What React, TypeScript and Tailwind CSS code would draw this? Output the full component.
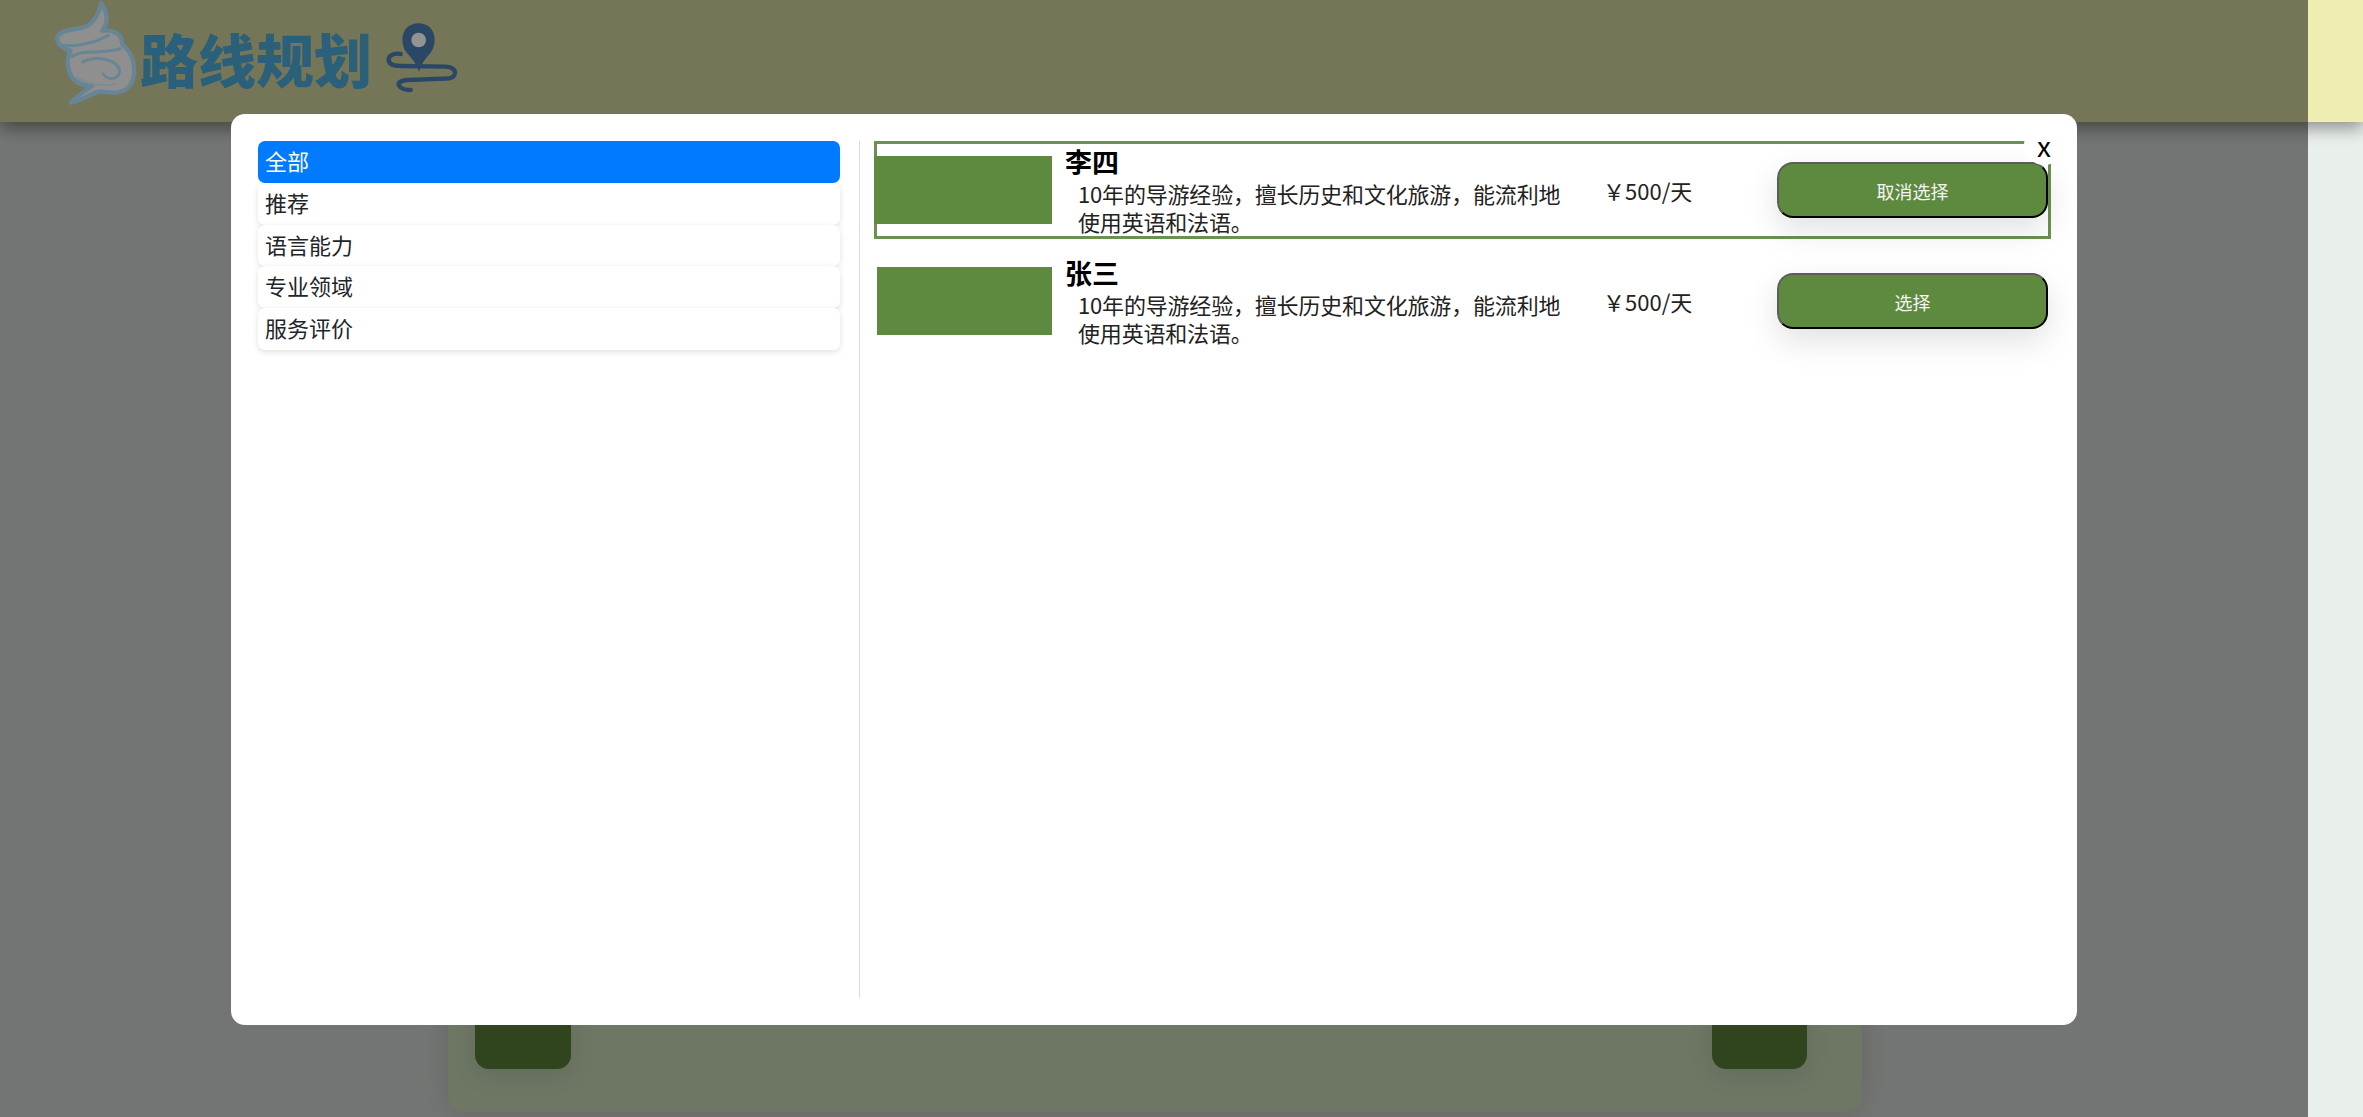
import React from "react";

const font = { fontFamily: '"Noto Sans CJK SC", "Noto Sans", sans-serif' };

function SwirlLogo() {
  return (
    <svg width="100" height="110" viewBox="0 0 300 330" fill="none" strokeLinecap="round" strokeLinejoin="round" className="shrink-0">
      <path
        d="M183 8 C205 40 205 72 186 92 C222 88 248 102 246 132 C282 160 292 215 274 250 C256 285 215 280 180 274 C150 282 118 304 92 308 C110 290 130 274 156 258 C126 258 102 246 90 222 C78 192 82 170 92 152 C66 146 48 128 52 110 C58 92 96 88 125 84 C160 76 176 44 183 8 Z"
        fill="#8f8f90"
        stroke="#678595"
        strokeWidth="13"
      />
      <path d="M68 136 C110 142 165 128 205 106" stroke="#678595" strokeWidth="9" />
      <path d="M96 170 C125 145 190 165 240 146" stroke="#678595" strokeWidth="9" />
      <path d="M128 186 C160 168 225 172 238 208 C244 236 206 246 190 222" stroke="#678595" strokeWidth="9" />
      <path d="M110 232 C140 250 185 262 226 252" stroke="#7d8c92" strokeWidth="6" />
    </svg>
  );
}

function PinIcon() {
  return (
    <svg width="100" height="90" viewBox="0 0 300 270" fill="none" className="shrink-0 mt-[10px]">
      <path d="M92 132 C70 128 55 138 56 150 C57 165 75 168 92 168 L225 170 C248 171 256 180 255 190 C253 202 240 206 225 206 L110 210 C90 212 82 220 88 228 C94 238 110 240 122 240" stroke="#2a4866" strokeWidth="13" strokeLinecap="round" />
      <path d="M147 186 C140 160 125 145 110 128 C88 100 92 40 146 40 C198 40 204 100 182 128 C168 145 153 160 147 186 Z" fill="#2a4866" />
      <circle cx="146" cy="90" r="22" fill="#939393" />
    </svg>
  );
}

const filters = ["全部", "推荐", "语言能力", "专业领域", "服务评价"];

function GuideCard({ name, selected }: { name: string; selected: boolean }) {
  return (
    <div className={`flex items-center h-[98px] border-[3px] ${selected ? "border-[#6b9150]" : "border-transparent"}`}>
      <div className={`h-[68px] shrink-0 bg-[#5e8a3f] ${selected ? "w-[178px] -ml-[3px]" : "w-[175px]"}`} />
      <div className="self-start pt-[3px] ml-[13px] w-[511px] shrink-0 text-black">
        <div className="text-[27px] leading-[30px] font-bold">{name}</div>
        <div className="ml-[13px] mt-[2px] w-[490px] text-[22px] leading-[28.4px] tracking-[-0.18px] text-[#222]">
          10年的导游经验，擅长历史和文化旅游，能流利地使用英语和法语。
        </div>
      </div>
      <div className="ml-[27px] w-[174px] shrink-0 text-[22px] leading-[29px] text-[#222]">￥500/天</div>
      <button className="w-[271px] h-[56px] shrink-0 pt-[2px] rounded-[16px] border-2 border-solid border-t-[#5c5c5c] border-l-[#5c5c5c] border-r-black border-b-black bg-[#5e8a3f] text-[18px] text-[#f4f4f4] shadow-[0_12px_32px_rgba(0,0,0,0.12)]">
        {selected ? "取消选择" : "选择"}
      </button>
    </div>
  );
}

export default function App() {
  return (
    <div className="relative w-full h-[1117px] overflow-hidden bg-[#e9efea]" style={font}>
      <header className="relative flex items-start h-[122px] pl-[40px] bg-[#eeeeb3] shadow-[0_6px_16px_rgba(0,0,0,0.4)]">
        <div className="relative z-20 flex items-start">
          <SwirlLogo />
          <div className="mt-[27px] text-[58px] leading-[62px] font-black text-[#2a6079] whitespace-nowrap">路线规划</div>
          <div className="ml-[-2px]">
            <PinIcon />
          </div>
        </div>
      </header>

      <main className="flex justify-center w-[2310px] pt-[100px]">
        <section className="flex items-end justify-between w-[1414px] h-[890px] pl-[27px] pr-[55px] pb-[43px] rounded-[16px] bg-[#e0f2cc] shadow-[0_0_30px_rgba(0,0,0,0.12)]">
          <button className="w-[96px] h-[60px] rounded-[14px] bg-[#628c3e] shadow-[0_6px_24px_rgba(0,0,0,0.1)]" />
          <button className="w-[95px] h-[60px] rounded-[14px] bg-[#628c3e] shadow-[0_6px_24px_rgba(0,0,0,0.1)]" />
        </section>
      </main>

      <div className="absolute left-0 top-0 z-10 flex justify-center w-[2308px] h-full bg-[rgba(0,0,0,0.51)]">
        <div className="relative flex mt-[114px] w-[1846px] h-[911px] p-[27px] rounded-[14px] bg-white">
          <div className="w-[582px] shrink-0 self-start flex flex-col">
            {filters.map((f, i) => (
              <div
                key={f}
                className={`h-[41.8px] pl-[7px] text-[22px] leading-[39px] rounded-[7px] ${
                  i === 0 ? "bg-[#007bff] text-white" : "bg-white text-[#212529] shadow-[0_2px_6px_rgba(0,0,0,0.12)]"
                }`}
              >
                {f}
              </div>
            ))}
          </div>
          <div className="ml-[19px] pl-[14px] w-[1192px] shrink-0 border-l-[1.5px] border-[#dcdcdc] flex flex-col gap-[13px]">
            <GuideCard name="李四" selected />
            <GuideCard name="张三" selected={false} />
          </div>
          <button className="absolute left-[1793px] top-[11px] flex items-center justify-center w-10 h-10 rounded-full bg-white text-[28px] leading-none text-black">
            x
          </button>
        </div>
      </div>
    </div>
  );
}
